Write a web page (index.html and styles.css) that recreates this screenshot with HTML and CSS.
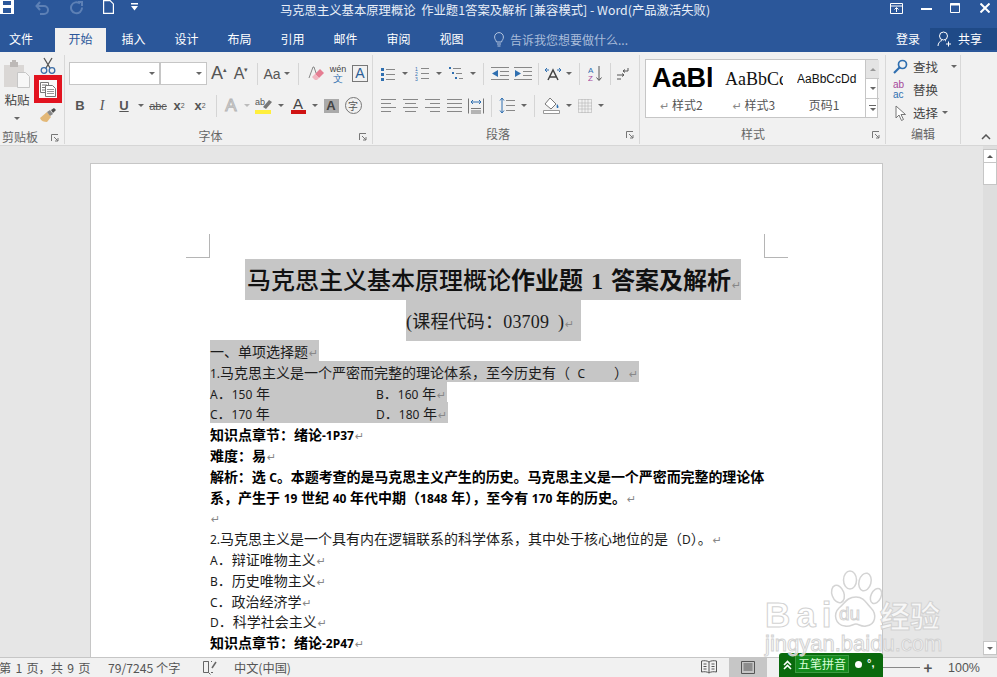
FILE: index.html
```html
<!DOCTYPE html>
<html lang="zh">
<head>
<meta charset="utf-8">
<title>马克思主义基本原理概论 作业题1答案及解析 [兼容模式] - Word(产品激活失败)</title>
<link rel="stylesheet" href="styles.css">
</head>
<body>
<div class="app">

<!-- title bar -->
<div class="titlebar">
	<div class="qat">
		<svg class="w14" width="14" height="14" viewBox="0 0 14 14"><path d="M0 0h14v14H0z" fill="#fff"/><path d="M3 1h8v4H3zM3 8h8v5H3z" fill="#2b579a"/></svg>
		<svg class="undo" width="16" height="14" viewBox="0 0 16 14" fill="none" stroke="#5d80b5" stroke-width="2"><path d="M2 5h7a4 4 0 0 1 0 8H5M5 1 1.500 5 5 9"/></svg>
		<svg class="redo" width="14" height="14" viewBox="0 0 14 14" fill="none" stroke="#5d80b5" stroke-width="2"><path d="M10 2.500a5.500 5.500 0 1 0 2 4M8 1h4v4"/></svg>
		<svg class="newdoc" width="11" height="14" viewBox="0 0 11 14" fill="none" stroke="#fff" stroke-width="1.200"><path d="M.6.600h6.500l3.300 3.300v9.500H.6z"/></svg>
		<svg class="qatmore" width="7" height="8" viewBox="0 0 7 8" fill="#fff"><path d="M0 0h7v1.500H0zM0 3h7L3.500 7.500z"/></svg>
	</div>
	<div class="doctitle">马克思主义基本原理概论&nbsp; 作业题1答案及解析 [兼容模式] - Word(产品激活失败)</div>
	<div class="winbtns">
		<svg width="13" height="11" viewBox="0 0 13 11" fill="none" stroke="#fff"><path d="M.5.500h12v10H.5zM.5 3h12"/><path d="M6.500 9V5M4.500 6.500l2-2 2 2"/></svg>
		<svg class="min" width="11" height="2" viewBox="0 0 11 2"><path d="M0 0h11v2H0z" fill="#fff"/></svg>
		<svg class="max" width="10" height="10" viewBox="0 0 10 10" fill="none" stroke="#fff"><path d="M.5.500h9v9h-9z"/><path d="M0 1.500h10" stroke-width="2"/></svg>
		<svg class="close" width="10" height="10" viewBox="0 0 10 10" stroke="#fff" stroke-width="2"><path d="M.5.500l9 9M9.500.500l-9 9"/></svg>
	</div>
</div>

<!-- tabs -->
<div class="tabs">
	<a class="tab tab-file">文件</a>
	<a class="tab tab-on">开始</a>
	<a class="tab">插入</a>
	<a class="tab">设计</a>
	<a class="tab">布局</a>
	<a class="tab">引用</a>
	<a class="tab">邮件</a>
	<a class="tab">审阅</a>
	<a class="tab">视图</a>
	<div class="tellme">
		<svg width="10" height="15" viewBox="0 0 10 15" fill="none" stroke="#b4c5df"><path d="M2.500 10C2 8 .6 7.500.6 5a4.400 4.400 0 0 1 8.800 0c0 2.500-1.400 3-1.900 5zM3 12h4M3.500 14h3"/></svg>
		<span>告诉我您想要做什么...</span>
	</div>
	<a class="login">登录</a>
	<a class="share">
		<svg width="15" height="16" viewBox="0 0 15 16" fill="none" stroke="#fff"><circle cx="6.500" cy="5" r="4"/><path d="M1 15c0-3 2-5 4-5.500M8 9.500l1 .5M9 13h5M11.500 10.500v5"/></svg>
		<span>共享</span>
	</a>
</div>

<!-- ribbon -->
<div class="ribbon">

	<div class="group g-clip">
		<div class="clip-body">
			<div class="paste">
				<svg width="28" height="30" viewBox="0 0 28 30"><path d="M1 6h20v22H1z" fill="#dad7d5"/><path d="M7 3h8v5H7z" fill="#bdb9b7"/><path d="M9 1h4v3H9z" fill="#bdb9b7"/><path d="M14.500 13.500h8l4 4v11h-12z" fill="#f7f7f7" stroke="#c6c6c6"/></svg>
				<span>粘贴</span>
				<i class="caret"></i>
			</div>
			<div class="clip-tools">
				<div class="cut">
					<svg width="16" height="17" viewBox="0 0 16 17" fill="none"><path d="M4 1l6 10M12 1 6 11" stroke="#555" stroke-width="1.300"/><circle cx="4" cy="13.500" r="2.800" stroke="#3c6ea8" stroke-width="1.300"/><circle cx="12" cy="13.500" r="2.800" stroke="#3c6ea8" stroke-width="1.300"/></svg>
				</div>
				<div class="copy">
					<svg width="16" height="15" viewBox="0 0 16 15" fill="#fff" stroke="#777"><path d="M.5.500h8v10h-8zM2 3h5M2 5.500h5M2 8h5"/><path d="M5.500 3.500h7l3 3v8h-10z"/><path d="M7 7.500h7M7 9.500h7M7 11.500h7" stroke="#999"/></svg>
				</div>
				<div class="brush">
					<svg width="17" height="15" viewBox="0 0 17 15"><path d="M0 10 7 4l4 5-4 5C4 14 1 13 0 10z" fill="#e3b877"/><path d="M7 4l3-2 3 4-3 2z" fill="#888"/><path d="M11 2l3-2 2 2-3 3z" fill="#4d4d4d"/></svg>
				</div>
			</div>
		</div>
		<div class="glabel label-clip">剪贴板<svg class="launch" width="8" height="8" viewBox="0 0 8 8" fill="none" stroke="#777"><path d="M.5 7V.5H7M3 3l4 4M4 7h3V4"/></svg></div>
	</div>

	<div class="group g-font">
		<div class="row">
			<div class="combo combo-font"><i class="caret"></i></div>
			<div class="combo combo-size"><i class="caret"></i></div>
			<span class="t w22 serif-a big">A<sup>▴</sup></span>
			<span class="t w22 serif-a">A<sup>▾</sup></span>
			<i class="sep"></i>
			<span class="t w18 aa">Aa</span><i class="caret w10"></i>
			<i class="sep"></i>
			<span class="t w24"><svg width="16" height="16" viewBox="0 0 16 16"><path d="M7 8l5-5 4 4-5 5z" fill="#e57d92"/><path d="M7 8l4 4-2 2H7L4 11z" fill="#f1b6c1"/><path d="M1 12 5 1h1l2 6" fill="none" stroke="#888"/></svg></span>
			<span class="t w20 wen"><b>wén</b><em>文</em></span>
			<span class="t w24"><span class="boxa">A</span></span>
		</div>
		<div class="row">
			<span class="t w22 b">B</span>
			<span class="t w22 i">I</span>
			<span class="t w22 u">U</span><i class="caret w12"></i>
			<span class="t w22 abc">abc</span>
			<span class="t w20 xs">x<sub>2</sub></span>
			<span class="t w22 xs">x<sup>2</sup></span>
			<i class="sep sep-x"></i>
			<span class="t w20 outline">A</span><i class="caret caret-pale w10"></i>
			<span class="t w22"><svg width="18" height="17" viewBox="0 0 18 17"><text x="0" y="8" font-family="Liberation Sans" font-size="9" fill="#555">ab</text><path d="M8 10l6-7 3 2-6 7z" fill="#777"/><path d="M0 13h16v4H0z" fill="#ffef3d"/></svg></span><i class="caret w10"></i>
			<span class="t w22 red-a">A</span><i class="caret w10"></i>
			<span class="t w20 grey-a"><span>A</span></span>
			<span class="t w24"><span class="ring">字</span></span>
		</div>
		<div class="glabel label-font">字体<svg class="launch" width="8" height="8" viewBox="0 0 8 8" fill="none" stroke="#777"><path d="M.5 7V.5H7M3 3l4 4M4 7h3V4"/></svg></div>
	</div>

	<div class="group g-para">
		<div class="row">
			<span class="t w22"><svg width="14" height="14" viewBox="0 0 14 14" stroke="#888"><path d="M5 2.500h9M5 7.500h9M5 12.500h9"/><path d="M0 1h3v3H0zM0 6h3v3H0zM0 11h3v3H0z" fill="#2f6fb0" stroke="none"/></svg></span><i class="caret w10"></i>
			<span class="t w22"><svg width="14" height="15" viewBox="0 0 14 15" stroke="#888"><path d="M6 2.500h8M6 7.500h8M6 12.500h8"/><text x="0" y="5" font-size="5" fill="#2f6fb0" stroke="none" font-family="Liberation Sans">1</text><text x="0" y="10" font-size="5" fill="#2f6fb0" stroke="none" font-family="Liberation Sans">2</text><text x="0" y="15" font-size="5" fill="#2f6fb0" stroke="none" font-family="Liberation Sans">3</text></svg></span><i class="caret w10"></i>
			<span class="t w22"><svg width="16" height="15" viewBox="0 0 16 15" stroke="#888"><path d="M5 2.500h8M8 7.500h6M11 12.500h4"/><path d="M1 1h2v2H1zM4 6h2v2H4zM7 11h2v2H7z" fill="#2f6fb0" stroke="none"/></svg></span><i class="caret w8"></i>
			<i class="sep sep-p1"></i>
			<span class="t w24"><svg width="18" height="13" viewBox="0 0 18 13" stroke="#888"><path d="M0 .5h18M9 4.500h9M9 8.500h9M0 12.500h18"/><path d="M7 3v7L1 6.500z" fill="#2f6fb0" stroke="none"/></svg></span>
			<span class="t w22"><svg width="18" height="13" viewBox="0 0 18 13" stroke="#888"><path d="M0 .5h18M9 4.500h9M9 8.500h9M0 12.500h18"/><path d="M1 3v7l6-3.500z" fill="#2f6fb0" stroke="none"/></svg></span>
			<i class="sep sep-p2"></i>
			<span class="t w20 asian"><svg width="18" height="14" viewBox="0 0 18 14" fill="none"><path d="M4 13 9 3l5 10M6 10h6" stroke="#444" stroke-width="1.500"/><path d="M1 3h4M1 3l2-2M1 3l2 2M13 3h4M17 3l-2-2M17 3l-2 2" stroke="#2f6fb0"/></svg></span><i class="caret w10"></i>
			<i class="sep sep-p3"></i>
			<span class="t w22"><svg width="14" height="17" viewBox="0 0 14 17" fill="none"><text x="0" y="7.500" font-size="8" fill="#2f6fb0" font-family="Liberation Sans">A</text><text x="0" y="16" font-size="8" fill="#a5479b" font-family="Liberation Sans">Z</text><path d="M11 1v14M8.500 12.500 11 15.500l2.500-3" stroke="#555"/></svg></span>
			<i class="sep sep-p4"></i>
			<span class="t w16"><svg width="14" height="13" viewBox="0 0 14 13" fill="none" stroke="#555"><path d="M12 1v3H7M9 2.500 7 4l2 1.500M1 8h7M6 6.500 8 8l-2 1.500M1 12h4"/></svg></span>
		</div>
		<div class="row row-para2">
			<span class="t w22"><svg width="15" height="13" viewBox="0 0 15 13" stroke="#888"><path d="M0 .5h15M0 4.500h10M0 8.500h15M0 12.500h10"/></svg></span>
			<span class="t w22"><svg width="15" height="13" viewBox="0 0 15 13" stroke="#888"><path d="M0 .5h15M2 4.500h11M0 8.500h15M2 12.500h11"/></svg></span>
			<span class="t w22"><svg width="15" height="13" viewBox="0 0 15 13" stroke="#888"><path d="M0 .5h15M5 4.500h10M0 8.500h15M5 12.500h10"/></svg></span>
			<span class="t w22"><svg width="15" height="13" viewBox="0 0 15 13" stroke="#888"><path d="M0 .5h15M0 4.500h15M0 8.500h15M0 12.500h15"/></svg></span>
			<span class="t w22"><svg width="16" height="16" viewBox="0 0 16 16" fill="none" stroke="#777"><path d="M.5.500v15M15.500.500v15M3 10.500h10M3 13h10M3 15h10"/><path d="M3 4h10M5 2 3 4l2 2M11 2l2 2-2 2" stroke="#2f6fb0"/></svg></span>
			<i class="sep sep-p5"></i>
			<span class="t w22"><svg width="16" height="17" viewBox="0 0 16 17" fill="none" stroke="#888"><path d="M7 3.500h9M7 8.500h9M7 13.500h9"/><path d="M3 1v15M1 3.500 3 1l2 2.500M1 13.500 3 16l2-2.500" stroke="#2f6fb0"/></svg></span><i class="caret w10"></i>
			<i class="sep sep-p6"></i>
			<span class="t w24"><svg width="17" height="17" viewBox="0 0 17 17"><path d="M7 1l6 6-5 5-6-5z" fill="#fff" stroke="#777"/><path d="M14 7c1.500 2 2 3 1 4-1 .5-2-.5-1-4z" fill="#2f6fb0"/><path d="M.5 13.500h16v3H.5z" fill="#fff" stroke="#999"/></svg></span><i class="caret w10"></i>
			<span class="t w20 cells"><svg width="14" height="14" viewBox="0 0 14 14" fill="none" stroke="#aaa" stroke-dasharray="1 1"><path d="M.5.500h13v13H.5zM.5 7h13M7 .5v13M.5 4h13M.5 10h13M4 .5v13M10 .5v13"/></svg></span><i class="caret w10"></i>
		</div>
		<div class="glabel label-para">段落<svg class="launch" width="8" height="8" viewBox="0 0 8 8" fill="none" stroke="#777"><path d="M.5 7V.5H7M3 3l4 4M4 7h3V4"/></svg></div>
	</div>

	<div class="group g-style">
		<div class="gallery">
			<div class="gitem gitem1"><div class="preview pv-big">AaBl</div><div class="gname"><span class="mark">↵</span> 样式2</div></div>
			<div class="gitem gitem2"><div class="preview pv-serif">AaBbCc</div><div class="gname"><span class="mark">↵</span> 样式3</div></div>
			<div class="gitem gitem3"><div class="preview pv-sans">AaBbCcDd</div><div class="gname">页码1</div></div>
			<div class="gscroll">
				<span class="gs-up"><i class="tri-up"></i></span>
				<span><i class="caret"></i></span>
				<span class="gs-more"><i class="more-line"></i><i class="caret"></i></span>
			</div>
		</div>
		<div class="glabel label-style">样式<svg class="launch" width="8" height="8" viewBox="0 0 8 8" fill="none" stroke="#777"><path d="M.5 7V.5H7M3 3l4 4M4 7h3V4"/></svg></div>
	</div>

	<div class="group g-edit">
		<div class="edit-list">
			<div class="edit-row"><svg width="15" height="15" viewBox="0 0 15 15" fill="none"><circle cx="9.500" cy="5.500" r="4" stroke="#2f6fb0" stroke-width="1.700"/><path d="M6.500 8.500 1 14" stroke="#2f6fb0" stroke-width="2.200"/></svg><span>查找</span><i class="caret caret-far"></i></div>
			<div class="edit-row"><span class="abac"><b>ab</b><em>ac</em></span><span>替换</span></div>
			<div class="edit-row"><svg width="11" height="16" viewBox="0 0 11 16" fill="#fff" stroke="#777"><path d="M1 1v12l3-3 2.500 5.500 2-1L6 9.500h4.500z"/></svg><span>选择</span><i class="caret"></i></div>
		</div>
		<div class="glabel">编辑</div>
	</div>

	<div class="collapse"><svg width="10" height="6" viewBox="0 0 10 6" fill="none" stroke="#555" stroke-width="1.500"><path d="M1 5l4-4 4 4"/></svg></div>
</div>

<!-- document -->
<div class="workspace">
	<div class="canvas">
		<div class="page">
			<i class="crop crop-l"></i>
			<i class="crop crop-r"></i>
			<div class="d-title"><span class="sel">马克思主义基本原理概论<b>作业题 1 答案及解析</b><span class="mark">↵</span></span></div>
			<div class="d-sub"><span class="sel">(课程代码：03709 )<span class="mark">↵</span></span></div>
			<div class="ln"><span class="sel">一、单项选择题<span class="mark">↵</span></span></div>
			<div class="ln"><span class="sel"><span class="en">1.</span>马克思主义是一个严密而完整的理论体系，至今历史有（&nbsp; <span class="en">C</span> &nbsp; &nbsp; &nbsp; &nbsp;）<span class="mark">↵</span></span></div>
			<div class="ln"><span class="sel"><span class="tabstop"><span class="en">A</span>．<span class="en">150</span> 年</span><span class="en">B</span>．<span class="en">160</span> 年<span class="mark">↵</span></span></div>
			<div class="ln"><span class="sel"><span class="tabstop"><span class="en">C</span>．<span class="en">170</span> 年</span><span class="en">D</span>．<span class="en">180</span> 年<span class="mark">↵</span></span></div>
			<div class="ln strong">知识点章节：绪论<span class="en">-1P37</span><span class="mark">↵</span></div>
			<div class="ln strong">难度：易<span class="mark">↵</span></div>
			<div class="ln strong fit">解析：选 <span class="en">C</span>。本题考查的是马克思主义产生的历史。马克思主义是一个严密而完整的理论体</div>
			<div class="ln strong">系，产生于 <span class="en">19</span> 世纪 <span class="en">40</span> 年代中期（<span class="en">1848</span> 年），至今有 <span class="en">170</span> 年的历史。<span class="mark">↵</span></div>
			<div class="ln"><span class="mark">↵</span></div>
			<div class="ln"><span class="en">2.</span>马克思主义是一个具有内在逻辑联系的科学体系，其中处于核心地位的是（<span class="en">D</span>）。<span class="mark">↵</span></div>
			<div class="ln"><span class="en">A</span>．辩证唯物主义<span class="mark">↵</span></div>
			<div class="ln"><span class="en">B</span>．历史唯物主义<span class="mark">↵</span></div>
			<div class="ln"><span class="en">C</span>．政治经济学<span class="mark">↵</span></div>
			<div class="ln"><span class="en">D</span>．科学社会主义<span class="mark">↵</span></div>
			<div class="ln strong">知识点章节：绪论<span class="en">-2P47</span><span class="mark">↵</span></div>
		</div>
	</div>
	<div class="vscroll">
		<span class="vs-btn"><i class="tri-up"></i></span>
		<span class="vs-thumb"></span>
		<span class="vs-fill"></span>
		<span class="vs-btn"><i class="caret"></i></span>
	</div>
</div>

<!-- status bar -->
<div class="statusbar">
	<span class="st-page">第 1 页，共 9 页</span>
	<span class="st-words">79/7245 个字</span>
	<svg class="st-proof" width="14" height="15" viewBox="0 0 14 15" fill="none" stroke="#666"><path d="M.5 1.500h5v11h-5zM5.500 1.500v11l2 2M8 1.500h1M8 12.500h2"/><path d="M9 8l4-6" stroke-width="1.500"/></svg>
	<span class="st-lang">中文(中国)</span>
	<div class="st-right">
		<svg class="st-read" width="16" height="15" viewBox="0 0 16 15" fill="none" stroke="#555"><path d="M8 2C6 .5 3 .5.500 1v11c2.500-.5 5.500-.5 7.500 1 2-1.500 5-1.500 7.500-1V1C13 .5 10 .5 8 2zM8 2v11M2.500 4h3M2.500 6.500h3M2.500 9h3M10.500 4h3M10.500 6.500h3M10.500 9h3"/></svg>
		<span class="st-print"><svg width="14" height="13" viewBox="0 0 14 13" fill="none" stroke="#555"><path d="M.5.500h13v12H.5zM2.500 3h9M2.500 5h9M2.500 7h9M2.500 9h9"/></svg></span>
		<span class="st-slider"></span>
		<span class="st-plus">+</span>
		<span class="st-zoom">100%</span>
	</div>
</div>

<!-- overlays: input method bar and image watermark -->
<div class="ime">
	<svg class="ime-arrow" width="9" height="10" viewBox="0 0 9 10" fill="none" stroke="#fff" stroke-width="1.600"><path d="M1 5l3.500-3.500L8 5M1 9l3.500-3.500L8 9"/></svg>
	<span class="ime-name">五笔拼音</span>
	<span class="ime-dot"></span>
	<span class="ime-punct">°,</span>
</div>
<div class="watermark">
	<svg class="wm-paw" width="56" height="60" viewBox="0 0 56 60" fill="#fff" fill-opacity=".75" stroke="#d4d4d4" stroke-width="1.500">
		<ellipse cx="11" cy="24" rx="6" ry="9" transform="rotate(-20 11 24)"/>
		<ellipse cx="23" cy="10" rx="6.500" ry="9"/>
		<ellipse cx="38" cy="12" rx="6" ry="9" transform="rotate(15 38 12)"/>
		<ellipse cx="49" cy="26" rx="5" ry="8" transform="rotate(25 49 26)"/>
		<path d="M29 27c8 0 10 6 15 11 6 6 5 17-5 18-5 1-7-2-10-2s-6 3-11 2C8 55 6 44 12 38c6-5 8-11 17-11z"/>
	</svg>
	<span class="wm-bai">Bai</span>
	<span class="wm-du">du</span>
	<span class="wm-cn">经验</span>
	<span class="wm-url">jingyan.baidu.com</span>
</div>

</div>
</body>
</html>
```

FILE: styles.css
```css
* {margin:0; padding:0; box-sizing:border-box;}
html, body {height:100%; overflow:hidden;}
body {font-family:"Noto Sans CJK SC", sans-serif; font-size:12px; color:#444;}
i, em {font-style:normal;}
svg {display:block; flex:none;}

.app {width:997px; height:677px; position:relative; overflow:hidden; display:flex; flex-direction:column; background:#e6e6e6;}

/* title bar */
.titlebar {height:26px; flex:none; background:#2b579a; color:#fff; display:grid; grid-template-columns:200px 1fr 200px;}
.qat {display:flex; align-items:flex-start;}
.undo {margin-left:21px; margin-top:1px;}
.redo {margin-left:19px; margin-top:1px;}
.newdoc {margin-left:19px;}
.qatmore {margin-left:17px; margin-top:3px;}
.doctitle {font-size:12.35px; line-height:21px; text-align:center; white-space:nowrap; padding-right:7px; color:#e8eef7;}
.winbtns {display:flex; justify-content:flex-end; align-items:flex-start; padding-top:3px; padding-right:7px;}
.min {margin-left:18px; margin-top:5px;}
.max {margin-left:18px; margin-top:0;}
.close {margin-left:20px; margin-top:0;}

/* tabs */
.tabs {height:26px; flex:none; background:#2b579a; display:flex; color:#fff; font-size:12px; line-height:25px;}
.tab {width:53px; text-align:center;}
.tab-file {width:42px; margin-right:13px;}
.tab-on {width:51px; margin-right:1px; margin-top:2px; line-height:22px; background:#f1f1f1; color:#2b579a;}
.tellme {display:flex; align-items:center; margin-left:16px; color:#a9bcd9; gap:6px;}
.login {margin-left:auto; width:24px; margin-right:10px; white-space:nowrap;}
.share {width:67px; height:22px; margin-top:2px; background:#1f4a87; display:flex; align-items:center; gap:6px; padding-left:7px; line-height:22px;}

/* ribbon */
.ribbon {height:94px; flex:none; background:#f1f1f1; border-bottom:1px solid #d6d6d6; display:flex;}
.group {height:89px; margin-top:3px; border-right:1px solid #d8d8d8; display:flex; flex-direction:column; position:relative;}
.g-clip {width:65px;}
.g-font {width:308px; padding:7px 0 0 4px;}
.g-para {width:267px; padding:7px 0 0 4px;}
.g-style {width:246px; padding:4px 0 0 5px;}
.g-edit {width:75px;}
.glabel {margin-top:auto; height:20px; line-height:19px; text-align:center; color:#666; position:relative;}
.label-clip {text-align:left; padding-left:2px;}
.label-font {padding-right:20px;}
.label-para {padding-right:20px;}
.label-style {padding-right:24px;}
.launch {position:absolute; right:5px; top:7px;}
.collapse {margin-left:20px; padding-top:82px;}

.row {display:flex; align-items:center; height:23px; margin-bottom:9px;}
.row-para2 {margin-bottom:0;}
.t {display:flex; align-items:center; justify-content:center; height:23px; flex:none; color:#555;}
.w8 {width:8px;} .w10 {width:10px;} .w12 {width:12px;} .w14 {width:14px;} .w16 {width:16px;} .w18 {width:18px;}
.w20 {width:20px;} .w22 {width:22px;} .w24 {width:24px;}
.caret {display:inline-block; flex:none; width:0; height:0; border:3px solid transparent; border-top:3px solid #666; border-bottom:0;}
.caret.w8, .caret.w10, .caret.w12 {box-sizing:content-box; width:0; margin:0 3px;}
.caret-pale {border-top-color:#bbb;}
.sep {flex:none; width:1px; height:22px; background:#d5d5d5; margin:0 5px;}

/* clipboard */
.clip-body {display:flex;}
.paste {width:34px; display:flex; flex-direction:column; align-items:center; padding-top:4px; font-size:12.5px; color:#444;}
.paste span {line-height:22px;}
.paste .caret {margin-top:6px;}
.clip-tools {width:28px;}
.cut {height:20px; display:flex; justify-content:center; align-items:flex-end; padding-bottom:1px;}
.copy {width:28px; height:28px; border:5px solid #e2131f; background:#fafafa; display:flex; align-items:center; justify-content:center;}
.brush {height:24px; display:flex; justify-content:center; align-items:center;}

/* font group */
.combo {height:23px; background:#fff; border:1px solid #c6c6c6; display:flex; align-items:center; justify-content:flex-end; padding-right:4px; flex:none;}
.combo-font {width:91px;}
.combo-size {width:47px; margin-right:1px;}
.serif-a {font-family:"Liberation Sans", sans-serif; font-size:16px; color:#555;}
.serif-a.big {font-size:18px;}
.serif-a sup {font-size:7px; line-height:1; align-self:flex-start; margin-top:4px; color:#555;}
.aa {font-family:"Liberation Sans", sans-serif; font-size:14px;}
.wen {flex-direction:column; line-height:9px; font-family:"Liberation Sans", sans-serif; font-size:9px;}
.wen b {font-weight:normal; color:#444;}
.wen em {color:#2f6fb0; font-size:10px;}
.boxa {width:16px; height:17px; border:1px solid #777; text-align:center; font:14px/15px "Liberation Sans", sans-serif; color:#2a5d95;}
.b, .i, .u, .abc, .xs, .outline, .red-a, .grey-a {font-family:"Liberation Sans", sans-serif;}
.b {font-weight:bold; font-size:13px;}
.i {font-style:italic; font-family:"Liberation Serif", serif; font-size:14px;}
.u {font-weight:bold; font-size:13px; text-decoration:underline;}
.abc {font-size:11px; text-decoration:line-through;}
.xs {font-size:13px; font-weight:bold;}
.xs sub, .xs sup {font-size:7px; font-weight:normal; line-height:1;}
.outline {font-size:17px; color:#f1f1f1; -webkit-text-stroke:1px #b5b5b5;}
.red-a {flex-direction:column; font-size:15px; line-height:13px; color:#444;}
.red-a::after {content:""; width:15px; height:4px; background:#d01313;}
.grey-a span {background:#aaa; color:#444; width:15px; text-align:center; font-size:13px; line-height:14px; font-weight:bold;}
.ring {width:17px; height:17px; border:1px solid #777; border-radius:50%; text-align:center; font-size:10px; line-height:15px;}

/* separators of the paragraph rows sit a little closer */
.sep-x {margin:0 4px 0 5px;}
.sep-p1, .sep-p2, .sep-p3, .sep-p4, .sep-p5, .sep-p6 {margin:0 4px;}

/* styles */
.gallery {width:233px; height:59px; background:#fff; border:1px solid #c6c6c6; display:flex;}
.gitem {flex:none; overflow:hidden; text-align:center; color:#555;}
.gitem1 {width:78px; padding-left:6px;}
.gitem2 {width:73px;}
.gitem3 {width:68px;}
.preview {height:36px; white-space:nowrap; overflow:hidden; color:#111; text-align:left;}
.pv-big {width:60px; font:bold 27px/36px "Liberation Sans", sans-serif; color:#000;}
.pv-serif {width:58px; font:18px/38px "Liberation Serif", serif; margin-left:1px;}
.pv-sans {font:12px/38px "Liberation Sans", sans-serif;}
.gname {line-height:18px; padding-right:14px;}
.gscroll {width:14px; flex:none; display:flex; flex-direction:column; border-left:1px solid #c6c6c6;}
.gscroll span {flex:1; display:flex; flex-direction:column; align-items:center; justify-content:center; gap:2px; border-bottom:1px solid #c6c6c6;}
.gscroll span:last-child {border-bottom:0;}
.gs-up {background:#e4e4e4;}
.tri-up {width:0; height:0; border:3px solid transparent; border-bottom:3px solid #999; border-top:0;}
.more-line {width:7px; height:1px; background:#666;}

/* editing */
.edit-list {padding:0 0 0 7px;}
.edit-row {height:23px; display:flex; align-items:center; gap:5px; font-size:12.500px; color:#444;}
.edit-row svg, .abac {width:15px; flex:none;}
.edit-row .caret {margin-left:-1px;}
.edit-row .caret-far {margin-left:8px;}
.abac {font:10px/10px "Liberation Sans", sans-serif;}
.abac b {display:block; font-weight:normal; color:#a5479b;}
.abac em {display:block; color:#2f6fb0;}

/* document */
.workspace {flex:1; display:flex; min-height:0;}
.canvas {flex:1; overflow:hidden; padding:17px 0 0 90px; background:#e6e6e6;}
.page {width:793px; height:600px; background:#fff; border:1px solid #c6c6c6; border-bottom:0; padding:93px 0 0 119px; position:relative; color:#1c1c1c; font-family:"Noto Sans", "Noto Sans CJK SC", sans-serif;}
.crop {position:absolute; width:24px; height:24px; top:70px; border-bottom:1px solid #b5b5b5;}
.crop-l {left:95px; border-right:1px solid #b5b5b5;}
.crop-r {left:673px; border-left:1px solid #b5b5b5;}
.sel {background:#c6c6c6; display:inline-block; padding-right:1px;}
.mark {font:11px/1 "DejaVu Sans", sans-serif; color:#888; margin-left:1px;}
.en {font-size:12px;}
.fit {letter-spacing:-.08px;}
.d-title {height:41px; margin-left:35px; white-space:nowrap; line-height:45px; font-size:24px; color:#111;}
.d-title .sel {height:41px; padding:0 0 0 2px; font-family:"Liberation Serif", "Noto Sans CJK SC", serif; font-weight:500;}
.d-title b {font-weight:bold; word-spacing:2px;}
.d-sub {height:42px; margin-left:196px; line-height:47px; font-size:18px; white-space:nowrap;}
.d-sub .sel {height:42px; padding-right:6px; word-spacing:4px; letter-spacing:.2px; font-family:"Liberation Serif", "Noto Sans CJK SC", serif;}
.ln {height:20.8px; line-height:24.8px; font-size:14px; white-space:nowrap;}
.ln .sel {height:20.8px;}
.tabstop {display:inline-block; width:166px;}
.strong {font-weight:bold; color:#000;}

.vscroll {width:14px; flex:none; background:#dedede; display:flex; flex-direction:column; padding-top:3px; padding-bottom:2px;}
.vs-btn {height:14px; background:#fff; border:1px solid #c6c6c6; display:flex; align-items:center; justify-content:center; flex:none;}
.vs-btn .tri-up {border-bottom-color:#555;}
.vs-thumb {height:23px; background:#fff; border:1px solid #c6c6c6; flex:none; margin-top:-1px;}
.vs-fill {flex:1;}

/* status bar */
.statusbar {height:20px; flex:none; background:#f1f1f1; border-top:1px solid #c6c6c6; display:flex; align-items:center; color:#555; font-size:12.2px; white-space:nowrap;}
.st-page {margin-left:-1px; width:109px; word-spacing:1.5px;}
.st-words {width:95px;}
.st-proof {margin-right:17px;}
.st-right {margin-left:auto; display:flex; align-items:center; height:19px;}
.st-read {margin-right:12px;}
.st-print {width:38px; height:19px; background:#c6c6c6; display:flex; align-items:center; justify-content:center; margin-right:116px;}
.st-slider {width:37px; height:1px; background:#888;}
.st-plus {width:16px; text-align:center; font-size:15px; font-weight:bold; color:#555;}
.st-zoom {width:61px; padding-left:12px; font-size:12.500px; font-family:"Liberation Sans", sans-serif;}

/* overlays */
.ime {position:absolute; left:779px; top:653px; width:104px; height:24px; background:#0a6a0d; border-radius:3px 3px 0 0; display:flex; align-items:flex-start; color:#fff; padding-top:2px;}
.ime-arrow {margin:5px 3px 0 4px;}
.ime-name {width:54px; height:18px; background:#148a1c; border:1px solid #3c9c42; font-size:12px; line-height:16px; text-align:center; color:#d8ffd8;}
.ime-dot {width:7px; height:7px; border-radius:50%; background:#fff; margin:6px 0 0 6px;}
.ime-punct {font:bold 11px/16px "Liberation Sans", sans-serif; margin-left:5px;}

.watermark {position:absolute; left:765px; top:570px; width:180px; height:83px; color:#fff; pointer-events:none;}
.watermark span {position:absolute; white-space:nowrap; color:rgba(255,255,255,.7); -webkit-text-stroke:1px #d2d2d2; font-family:"Liberation Sans", sans-serif;}
.wm-paw {position:absolute; left:62px; top:0;}
.wm-bai {left:0; top:25px; font-size:35px; line-height:40px; font-weight:bold; letter-spacing:6px;}
.wm-du {left:74px; top:33px; font-size:19px; line-height:22px;}
.watermark .wm-cn {left:115px; top:25px; font-family:"Noto Sans CJK SC", sans-serif; font-size:30px; line-height:38px; font-weight:bold;}
.wm-url {left:0; top:65px; font-size:22px; line-height:18px;}
```
